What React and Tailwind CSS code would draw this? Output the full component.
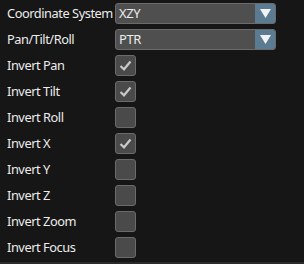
import React from "react";

const Combo = ({ value }) => (
  <div className="flex h-[21px] w-[161px] overflow-hidden rounded-[3px] border border-[#6b6b6b] bg-[#4f4f4f]">
    <div className="flex flex-1 items-center pl-[3px] text-[13px] text-[#ececec]">{value}</div>
    <div className="flex w-[20px] items-center justify-center bg-[#5b7b92]">
      <svg width="11" height="9" viewBox="0 0 11 9">
        <polygon points="0,0 11,0 5.5,9" fill="#f2f2f2" />
      </svg>
    </div>
  </div>
);

const Check = ({ checked }) => (
  <div className="flex h-[21px] w-[21px] items-center justify-center rounded-[3px] border border-[#6b6b6b] bg-[#4a4a4a]">
    {checked && (
      <svg width="13" height="11" viewBox="0 0 13 11">
        <path d="M1.5 6 L5 9.3 L11.5 1.5" stroke="#c9c9c9" strokeWidth="2.2" fill="none" />
      </svg>
    )}
  </div>
);

const rows = [
  ["Invert Pan", true],
  ["Invert Tilt", true],
  ["Invert Roll", false],
  ["Invert X", true],
  ["Invert Y", false],
  ["Invert Z", false],
  ["Invert Zoom", false],
  ["Invert Focus", false],
];

export default function App() {
  return (
    <div
      className="flex h-[264px] w-[304px] flex-col bg-[#161616] text-[12.8px] leading-none tracking-[-0.45px] text-[#ececec]"
      style={{ fontFamily: '"Noto Sans", "Open Sans", sans-serif' }}
    >
      <div className="grid flex-1 grid-cols-[108px_auto] content-start gap-y-[5px] pl-[7px] pt-[3px]">
        <div className="flex items-center whitespace-nowrap">Coordinate System</div>
        <Combo value="XZY" />
        <div className="flex items-center whitespace-nowrap">Pan/Tilt/Roll</div>
        <Combo value="PTR" />
        {rows.map(([label, checked]) => (
          <React.Fragment key={label}>
            <div className="flex items-center whitespace-nowrap">{label}</div>
            <Check checked={checked} />
          </React.Fragment>
        ))}
      </div>
      <div className="h-[2px] bg-[#2a2a2a]" />
    </div>
  );
}
